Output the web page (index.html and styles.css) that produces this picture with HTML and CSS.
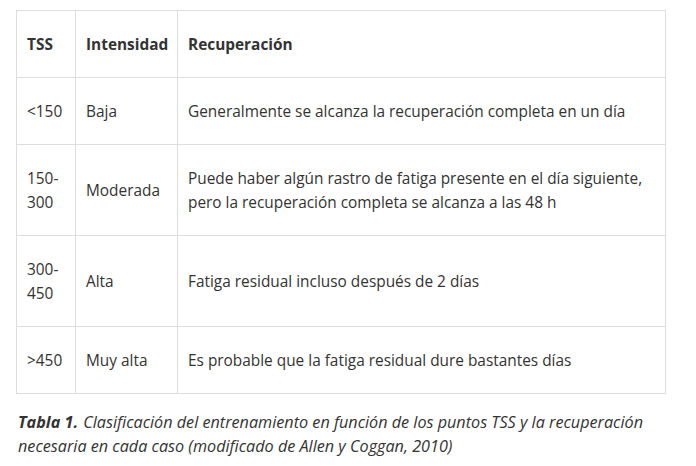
FILE: index.html
```html
<!DOCTYPE html>
<html lang="es">
<head>
<meta charset="utf-8">
<title>Tabla TSS</title>
<link rel="stylesheet" href="styles.css">
</head>
<body>
<div class="page">
  <table class="tss-table">
    <colgroup>
      <col class="c1">
      <col class="c2">
      <col class="c3">
    </colgroup>
    <thead>
      <tr>
        <th>TSS</th>
        <th>Intensidad</th>
        <th>Recuperación</th>
      </tr>
    </thead>
    <tbody>
      <tr>
        <td>&lt;150</td>
        <td>Baja</td>
        <td>Generalmente se alcanza la recuperación completa en un día</td>
      </tr>
      <tr>
        <td>150-<br>300</td>
        <td>Moderada</td>
        <td>Puede haber algún rastro de fatiga presente en el día siguiente, pero la recuperación completa se alcanza a las 48 h</td>
      </tr>
      <tr>
        <td>300-<br>450</td>
        <td>Alta</td>
        <td>Fatiga residual incluso después de 2 días</td>
      </tr>
      <tr>
        <td>&gt;450</td>
        <td>Muy alta</td>
        <td>Es probable que la fatiga residual dure bastantes días</td>
      </tr>
    </tbody>
  </table>
  <p class="caption"><strong>Tabla 1.</strong> Clasificación del entrenamiento en función de los puntos TSS y la recuperación necesaria en cada caso (modificado de Allen y Coggan, 2010)</p>
</div>
</body>
</html>
```
FILE: styles.css
```css
html, body {
  margin: 0;
  padding: 0;
  background: #ffffff;
}
body {
  font-family: "Open Sans", "Noto Sans", sans-serif;
  font-size: 15.4px;
  line-height: 24px;
  color: #333333;
}
.page {
  padding: 10px 0 0 16px;
  width: 650px;
}
.tss-table {
  width: 650px;
  border-collapse: collapse;
  table-layout: fixed;
  border: 1px solid #dddddd;
}
.c1 { width: 59px; }
.c2 { width: 102px; }
.tss-table th,
.tss-table td {
  border: 1px solid #dddddd;
  padding: 22px 10px 20px;
  text-align: left;
  vertical-align: middle;
}
.tss-table th {
  font-weight: 700;
}
.caption {
  margin: 16px 0 0 2px;
  font-style: italic;
  font-size: 16.2px;
  width: 640px;
}
.caption strong {
  font-weight: 700;
  margin-right: 1px;
}
```
